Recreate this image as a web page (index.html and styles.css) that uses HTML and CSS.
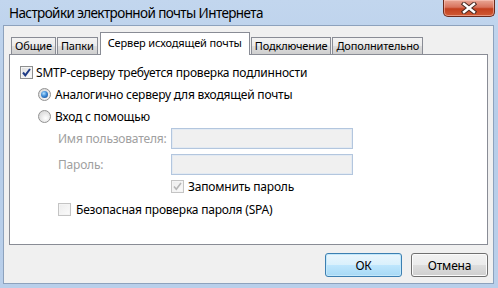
FILE: index.html
```html
<!DOCTYPE html>
<html lang="ru">
<head>
    <meta charset="UTF-8">
    <title>Настройки электронной почты Интернета</title>
    <link rel="stylesheet" href="styles.css">
</head>
<body>
    <div class="window">
        <div class="titlebar">
            <span class="title">Настройки электронной почты Интернета</span>
            <div class="close">
                <svg width="16" height="12" viewBox="0 0 16 12">
                    <path d="M3 2 L13 10 M13 2 L3 10" stroke="#4a2a22" stroke-width="4.4" stroke-linecap="square" fill="none"/>
                    <path d="M3 2 L13 10 M13 2 L3 10" stroke="#ffffff" stroke-width="2.4" stroke-linecap="square" fill="none"/>
                </svg>
            </div>
        </div>
        <div class="client">
            <div class="tabs">
                <div class="tab">Общие</div>
                <div class="tab">Папки</div>
                <div class="tab active">Сервер исходящей почты</div>
                <div class="tab">Подключение</div>
                <div class="tab">Дополнительно</div>
            </div>
            <div class="panel">
                <div class="row">
                    <span class="check">
                        <svg width="11" height="11" viewBox="0 0 11 11"><path d="M2 5.5 L4.3 8.3 L9 2" stroke="#1d3a85" stroke-width="2" fill="none"/></svg>
                    </span>
                    SMTP-серверу требуется проверка подлинности
                </div>
                <div class="row indent-1">
                    <span class="radio on"></span>
                    Аналогично серверу для входящей почты
                </div>
                <div class="row indent-1">
                    <span class="radio"></span>
                    Вход с помощью
                </div>
                <div class="field first">
                    <span class="field-label">Имя пользователя:</span>
                    <span class="input"></span>
                </div>
                <div class="field">
                    <span class="field-label">Пароль:</span>
                    <span class="input"></span>
                </div>
                <div class="row remember">
                    <span class="check disabled">
                        <svg width="11" height="11" viewBox="0 0 11 11"><path d="M2 5.5 L4.3 8.3 L9 2" stroke="#b5b5b5" stroke-width="1.6" fill="none"/></svg>
                    </span>
                    Запомнить пароль
                </div>
                <div class="row indent-2">
                    <span class="check disabled"></span>
                    Безопасная проверка пароля (SPA)
                </div>
            </div>
            <div class="buttons">
                <div class="btn default">ОК</div>
                <div class="btn">Отмена</div>
            </div>
        </div>
    </div>
</body>
</html>
```

FILE: styles.css
```css
* {
    margin: 0;
    padding: 0;
    box-sizing: border-box;
}

body {
    font-family: 'Noto Sans', sans-serif;
    font-size: 12px;
    letter-spacing: -0.2px;
    color: #000;
    overflow: hidden;
}

.window {
    width: 498px;
    height: 288px;
    display: flex;
    flex-direction: column;
    background: linear-gradient(#c2d6ee, #b6cde9 40%, #b9cfea);
}

.titlebar {
    height: 25px;
    display: flex;
    align-items: flex-start;
}

.title {
    font-size: 13.5px;
    letter-spacing: -0.6px;
    padding: 4px 0 0 9px;
    color: #000;
}

.close {
    margin-left: auto;
    margin-right: 3px;
    width: 52px;
    height: 17px;
    border: 1px solid #6b2a1c;
    border-top: none;
    border-radius: 0 0 5px 5px;
    background: linear-gradient(#e9a796, #d8735d 45%, #c3401f 55%, #cf5a34);
    box-shadow: inset 0 0 0 1px rgba(255, 210, 200, 0.5);
    display: flex;
    justify-content: center;
    align-items: center;
}

.client {
    flex: 1;
    margin: 0 4px 4px 3px;
    background-color: #f0f0f0;
    border: 1px solid #8da2bd;
    padding: 6px 5px 0 5px;
    display: flex;
    flex-direction: column;
}

.tabs {
    display: flex;
    align-items: flex-end;
    height: 22px;
    padding-left: 2px;
}

.tab {
    height: 17px;
    padding: 0 3px;
    margin-right: 1px;
    border: 1px solid #898c95;
    border-bottom: none;
    background: linear-gradient(#f3f3f3, #ebebeb 50%, #dddddd 51%, #cfcfcf);
    font-size: 11px;
    line-height: 16px;
    letter-spacing: -0.15px;
    white-space: nowrap;
}

.tab.active {
    height: 23px;
    margin-bottom: -1px;
    margin-left: 1px;
    padding: 0 7px;
    background: #fff;
    line-height: 20px;
    position: relative;
    z-index: 1;
}

.panel {
    height: 191px;
    background-color: #fff;
    border: 1px solid #898c95;
    padding: 6px 10px 0 10px;
}

.row {
    height: 22px;
    display: flex;
    align-items: center;
    gap: 3px;
    white-space: nowrap;
}

.indent-1 {
    padding-left: 18px;
    gap: 4px;
}

.indent-2 {
    padding-left: 38px;
    gap: 5px;
}

.remember {
    height: 23px;
    padding-left: 151px;
    gap: 4px;
}

.check {
    width: 13px;
    height: 13px;
    border: 1px solid #8e8f8f;
    background: linear-gradient(135deg, #dcdcdc, #ffffff);
    box-shadow: inset 0 0 0 1px #f4f4f4;
    display: flex;
    justify-content: center;
    align-items: center;
    flex-shrink: 0;
}

.check.disabled {
    border-color: #c4c4c4;
    background: linear-gradient(135deg, #ececec, #fbfbfb);
}

.radio {
    width: 13px;
    height: 13px;
    border-radius: 50%;
    border: 1px solid #929292;
    background: radial-gradient(circle at 60% 65%, #ffffff, #e4e4e4 55%, #cfcfcf);
    display: flex;
    justify-content: center;
    align-items: center;
    flex-shrink: 0;
}

.radio.on::after {
    content: '';
    width: 7px;
    height: 7px;
    border-radius: 50%;
    background: radial-gradient(circle at 40% 35%, #b4e2ff, #3d8ad6 45%, #103f86);
}

.field {
    height: 21px;
    display: flex;
    align-items: center;
    padding-left: 38px;
    margin-top: 5px;
}

.field.first {
    margin-top: 1px;
}

.field-label {
    width: 113px;
    color: #a0a0a0;
}

.input {
    width: 182px;
    height: 21px;
    background-color: #f0f0f0;
    border: 1px solid #b3c6de;
    box-shadow: inset 0 0 0 1px #e3eaf2;
}

.buttons {
    display: flex;
    justify-content: flex-end;
    gap: 9px;
    margin-top: 8px;
}

.btn {
    width: 77px;
    height: 24px;
    border: 1px solid #707070;
    border-radius: 3px;
    background: linear-gradient(#f2f2f2, #ebebeb 50%, #dddddd 51%, #cfcfcf);
    box-shadow: inset 0 0 0 1px #fbfbfb;
    display: flex;
    justify-content: center;
    align-items: center;
}

.btn.default {
    border-color: #3c7fb1;
    background: linear-gradient(#eaf6fd, #d9f0fc 50%, #bee6fd 51%, #a7d9f5);
    box-shadow: inset 0 0 0 1px #c3e8fb;
}
```
